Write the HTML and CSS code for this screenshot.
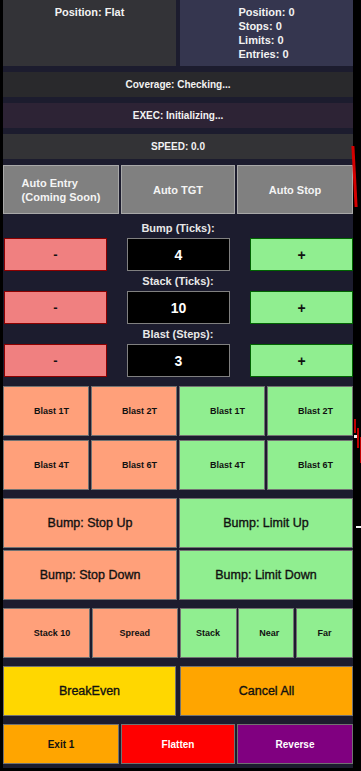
FILE: index.html
```html
<!DOCTYPE html>
<html>
<head>
<meta charset="utf-8">
<link rel="stylesheet" href="styles.css">
</head>
<body>
<div class="chart-marks">
  <span class="mark red-a"></span>
  <span class="mark red-b"></span>
  <span class="mark red-c"></span>
  <span class="mark red-d"></span>
  <span class="mark white-a"></span>
  <span class="mark white-b"></span>
</div>
<div class="panel">
  <div class="top-row">
    <div class="info-box info-left">Position: Flat</div>
    <div class="info-box info-right">
      <div class="info-lines">
        <div>Position: 0</div>
        <div>Stops: 0</div>
        <div>Limits: 0</div>
        <div>Entries: 0</div>
      </div>
    </div>
  </div>
  <div class="status-bar bar-coverage">Coverage: Checking...</div>
  <div class="status-bar bar-exec">EXEC: Initializing...</div>
  <div class="status-bar bar-speed">SPEED: 0.0</div>

  <div class="auto-row">
    <div class="btn auto-btn"><span class="auto-multi">Auto Entry<br>(Coming Soon)</span></div>
    <div class="btn auto-btn">Auto TGT</div>
    <div class="btn auto-btn">Auto Stop</div>
  </div>

  <div class="adj-label">Bump (Ticks):</div>
  <div class="adj-row">
    <div class="btn minus">-</div>
    <div class="value">4</div>
    <div class="btn plus">+</div>
  </div>
  <div class="adj-label">Stack (Ticks):</div>
  <div class="adj-row">
    <div class="btn minus">-</div>
    <div class="value">10</div>
    <div class="btn plus">+</div>
  </div>
  <div class="adj-label">Blast (Steps):</div>
  <div class="adj-row">
    <div class="btn minus">-</div>
    <div class="value">3</div>
    <div class="btn plus">+</div>
  </div>

  <div class="blast-grid">
    <div class="btn small salmon shift">Blast 1T</div>
    <div class="btn small salmon shift">Blast 2T</div>
    <div class="btn small green shift">Blast 1T</div>
    <div class="btn small green shift">Blast 2T</div>
    <div class="btn small salmon shift">Blast 4T</div>
    <div class="btn small salmon shift">Blast 6T</div>
    <div class="btn small green shift">Blast 4T</div>
    <div class="btn small green shift">Blast 6T</div>
  </div>

  <div class="bump-grid">
    <div class="btn big salmon">Bump: Stop Up</div>
    <div class="btn big green">Bump: Limit Up</div>
    <div class="btn big salmon">Bump: Stop Down</div>
    <div class="btn big green">Bump: Limit Down</div>
  </div>

  <div class="stack-row">
    <div class="btn small salmon shift">Stack 10</div>
    <div class="btn small salmon">Spread</div>
    <div class="btn small green">Stack</div>
    <div class="btn small green shift-s">Near</div>
    <div class="btn small green">Far</div>
  </div>

  <div class="be-row">
    <div class="btn big gold">BreakEven</div>
    <div class="btn big orange">Cancel All</div>
  </div>

  <div class="bottom-row">
    <div class="btn action orange">Exit 1</div>
    <div class="btn action red">Flatten</div>
    <div class="btn action purple">Reverse</div>
  </div>
</div>
</body>
</html>
```

FILE: styles.css
```css
* { box-sizing: border-box; }

html, body {
  margin: 0;
  padding: 0;
  background: #000;
}

body {
  font-family: "Liberation Sans", Arial, sans-serif;
  position: relative;
  width: 361px;
  height: 771px;
  overflow: hidden;
}

.panel {
  margin-left: 3px;
  width: 350px;
  background: #1c1c2e;
  padding-bottom: 4px;
  display: flex;
  flex-direction: column;
}

.top-row {
  display: grid;
  grid-template-columns: 173px 173px;
  column-gap: 4px;
  height: 66px;
}

.info-box {
  color: #f2f2f2;
  font-weight: bold;
  font-size: 11px;
  text-align: center;
}

.info-left {
  background: #333337;
  padding-top: 6px;
}

.info-right {
  background: #35364f;
  padding-top: 5px;
}

.info-lines {
  display: inline-block;
  text-align: left;
  line-height: 14px;
}

.status-bar {
  margin-top: 6px;
  height: 25px;
  line-height: 25px;
  text-align: center;
  color: #f2f2f2;
  font-weight: bold;
  font-size: 10px;
}

.bar-coverage { background: #29292c; }
.bar-exec { background: #2d2335; }
.bar-speed { background: #333336; }

.btn {
  display: flex;
  align-items: center;
  justify-content: center;
  border: 1px solid #727272;
  color: #111;
  text-align: center;
}

.auto-row {
  margin-top: 6px;
  display: grid;
  grid-template-columns: 116px 114px 116px;
  column-gap: 2px;
  height: 49px;
}

.auto-btn {
  background: #808080;
  border-color: #a8a8a8;
  color: #f4f4f4;
  font-weight: bold;
  font-size: 11px;
}

.auto-multi {
  display: inline-block;
  text-align: left;
  line-height: 14px;
}

.adj-label {
  height: 20px;
  line-height: 20px;
  text-align: center;
  color: #e8e8e8;
  font-weight: bold;
  font-size: 11px;
}

.auto-row + .adj-label { margin-top: 4px; }

.adj-row {
  display: grid;
  grid-template-columns: 103px 103px 103px;
  column-gap: 20px;
  padding-left: 1px;
  height: 33px;
}

.minus {
  background: #f08080;
  border: 1px solid #8b0000;
  font-weight: bold;
  font-size: 13px;
}

.plus {
  background: #90ee90;
  border: 1px solid #006400;
  font-weight: bold;
  font-size: 14px;
}

.value {
  display: flex;
  align-items: center;
  justify-content: center;
  background: #000;
  border: 1px solid #808080;
  color: #fff;
  font-weight: bold;
  font-size: 14px;
}

.salmon { background: #ffa07a; }
.green { background: #90ee90; }
.gold { background: #ffd700; }
.orange { background: #ffa500; }
.red { background: #ff0000; color: #fff; }
.purple { background: #800080; color: #fff; }

.small {
  font-weight: bold;
  font-size: 9px;
}

.shift { padding-left: 11px; }
.shift-s { padding-left: 6px; }

.big {
  font-size: 12.5px;
  -webkit-text-stroke: 0.35px #111;
}

.action {
  font-weight: bold;
  font-size: 10px;
}

.blast-grid {
  margin-top: 9px;
  display: grid;
  grid-template-columns: repeat(4, 1fr);
  column-gap: 2px;
  row-gap: 4px;
  grid-auto-rows: 50px;
}

.bump-grid {
  margin-top: 8px;
  display: grid;
  grid-template-columns: 1fr 1fr;
  column-gap: 2px;
  row-gap: 2px;
  grid-auto-rows: 50px;
}

.stack-row {
  margin-top: 8px;
  display: grid;
  grid-template-columns: 87px 86px 57px 56px 57px;
  column-gap: 1.75px;
  height: 50px;
}

.be-row {
  margin-top: 8px;
  display: grid;
  grid-template-columns: 173px 173px;
  column-gap: 4px;
  height: 50px;
}

.bottom-row {
  margin-top: 8px;
  display: grid;
  grid-template-columns: 116px 114px 116px;
  column-gap: 2px;
  height: 40px;
}

.chart-marks .mark {
  position: absolute;
  display: block;
}

.red-a {
  left: 353px;
  top: 146px;
  width: 3px;
  height: 61px;
  background: #d40000;
  transform: skewX(3deg);
}

.red-b { left: 354px; top: 419px; width: 2px; height: 14px; background: #c00000; }
.red-c { left: 357px; top: 428px; width: 2px; height: 20px; background: #c00000; }
.red-d { left: 360px; top: 437px; width: 1px; height: 26px; background: #c00000; }
.white-a { left: 354px; top: 435px; width: 3px; height: 3px; background: #f0f0f0; }
.white-b { left: 356px; top: 526px; width: 5px; height: 2px; background: #f0f0f0; }
```
